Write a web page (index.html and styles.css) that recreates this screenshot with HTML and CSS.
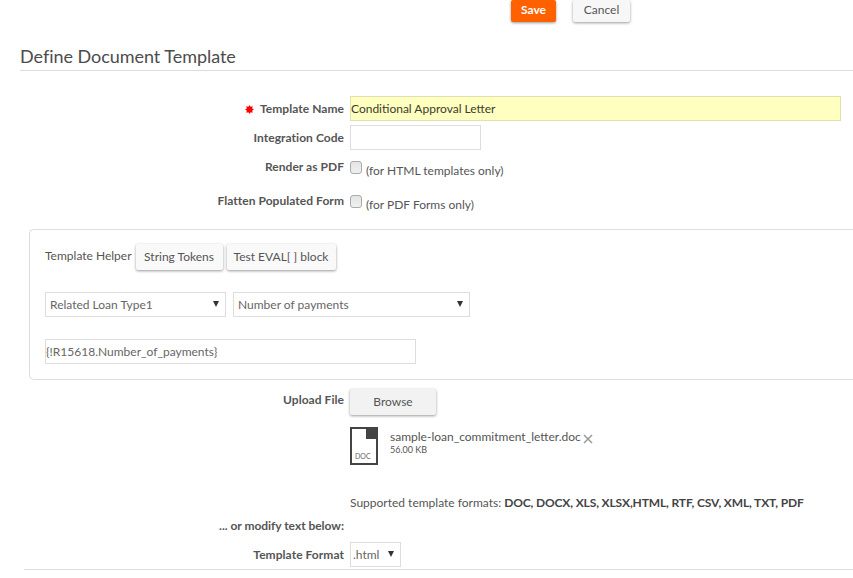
FILE: index.html
```html
<!doctype html>
<html lang="en">
<head>
    <meta charset="utf-8" />
    <title>Define Document Template</title>
    <link rel="stylesheet" href="styles.css">
</head>
<body>
    <div class="actions">
        <button class="btn save">Save</button>
        <button class="btn cancel">Cancel</button>
    </div>

    <h1 class="title">Define Document Template</h1>

    <div class="row name-row">
        <label class="label">
            <svg class="req" width="9" height="9" viewBox="0 0 18 18">
                <path d="M9 0L11.2 3.6 15.4 2.6 14.4 6.8 18 9 14.4 11.2 15.4 15.4 11.2 14.4 9 18 6.8 14.4 2.6 15.4 3.6 11.2 0 9 3.6 6.8 2.6 2.6 6.8 3.6Z" fill="#f00"/>
            </svg>Template Name</label>
        <input class="text name" type="text" value="Conditional Approval Letter">
    </div>
    <div class="row code-row">
        <label class="label">Integration Code</label>
        <input class="text code" type="text">
    </div>
    <div class="row pdf-row">
        <label class="label">Render as PDF</label>
        <input class="check" type="checkbox">
        <span class="hint">(for HTML templates only)</span>
    </div>
    <div class="row flat-row">
        <label class="label">Flatten Populated Form</label>
        <input class="check" type="checkbox">
        <span class="hint">(for PDF Forms only)</span>
    </div>

    <div class="helper">
        <div class="helper-top">
            <span class="helper-label">Template Helper</span>
            <button class="btn small tokens">String Tokens</button>
            <button class="btn small eval">Test EVAL[ ] block</button>
        </div>
        <div class="helper-selects">
            <div class="select-wrap loan">
                <select><option>Related Loan Type1</option></select>
            </div>
            <div class="select-wrap field">
                <select><option>Number of payments</option></select>
            </div>
        </div>
        <input class="text token" type="text" value="{!R15618.Number_of_payments}">
    </div>

    <div class="row upload-row">
        <label class="label">Upload File</label>
        <button class="btn browse">Browse</button>
    </div>
    <div class="file">
        <div class="doc">
            <svg width="28" height="38" viewBox="0 0 28 38">
                <path d="M1 1H27V37H1Z" fill="#fff" stroke="#444" stroke-width="2"/>
                <path d="M16 1H27V12H16Z" fill="#444"/>
            </svg>
            <span class="doc-type">DOC</span>
        </div>
        <div class="file-info">
            <div class="file-name">sample-loan_commitment_letter.doc
                <svg class="remove" width="10" height="10" viewBox="0 0 10 10">
                    <path d="M1 1L9 9M9 1L1 9" stroke="#999" stroke-width="1.5" fill="none"/>
                </svg>
            </div>
            <div class="file-size">56.00 KB</div>
        </div>
    </div>
    <div class="formats">Supported template formats: <b>DOC, DOCX, XLS, XLSX,HTML, RTF, CSV, XML, TXT, PDF</b></div>
    <div class="row modify-row">
        <label class="label">... or modify text below:</label>
    </div>
    <div class="row format-row">
        <label class="label">Template Format</label>
        <div class="select-wrap ext">
            <select><option>.html</option></select>
        </div>
    </div>
    <div class="editor"></div>
</body>
</html>
```

FILE: styles.css
```css
*{ box-sizing:border-box; }
html, body
{
    margin:0;
    height:578px;
    overflow:hidden;
}
body
{
    background:#fff;
    color:#555;
    font-family:"Lato", "Liberation Sans", sans-serif;
    font-size:12px;
}
.actions
{
    display:flex;
    height:23px;
    padding-left:511px;
    align-items:flex-start;
}
.btn
{
    font-family:inherit;
    font-size:12px;
    color:#555;
    background:#f7f7f7;
    border:0;
    border-radius:2px;
    padding:0;
    box-shadow:0 1px 3px rgba(0,0,0,0.4);
}
.save
{
    width:45px;
    height:22px;
    padding-bottom:3px;
    background:#ff6000;
    color:#fff;
    font-weight:bold;
    margin-right:17px;
}
.cancel
{
    width:57px;
    height:22px;
    padding-bottom:3px;
}
.title
{
    margin:0 0 0 20px;
    padding-top:21px;
    height:48px;
    border-bottom:1px solid #ddd;
    color:#4c4c4c;
    font-size:18px;
    line-height:24px;
    font-weight:normal;
    letter-spacing:-0.04px;
}
.row{ display:flex; align-items:flex-start; }
.label
{
    width:344px;
    margin-right:6px;
    flex:none;
    text-align:right;
    font-weight:bold;
    color:#555;
    line-height:16px;
    letter-spacing:0.05px;
}
.req
{
    margin-right:6px;
    vertical-align:-1px;
}
.text
{
    display:block;
    height:25px;
    padding:0;
    border:1px solid #ddd;
    font-family:inherit;
    font-size:12px;
    color:#555;
    outline:0;
}
.name-row{ margin-top:25px; }
.name-row .label, .code-row .label{ padding-top:5px; }
.name
{
    width:491px;
    background:#ffffc0;
    border-color:#e0e0b0;
    color:#3c3c2c;
}
.code-row{ margin-top:4px; }
.code{ width:131px; }
.pdf-row{ margin-top:8px; height:25px; }
.flat-row{ margin-top:9px; height:25px; }
.pdf-row .label{ padding-top:1px; }
.flat-row .label{ padding-top:1px; }
.check
{
    appearance:none;
    width:12px;
    height:13px;
    margin:3px 4px 0 0;
    border:1px solid #aaa;
    border-radius:3px;
    background:linear-gradient(#e4e4e4, #f0f0f0);
}
.hint{ line-height:16px; padding-top:5px; color:#555; }
.helper
{
    height:151px;
    margin:12px 0 0 29px;
    padding:14px 15px 0;
    border:1px solid #ddd;
    border-right:0;
    border-radius:5px 0 0 5px;
}
.helper-top{ display:flex; align-items:flex-start; }
.helper-label{ line-height:24px; margin-right:4px; }
.small
{
    height:26px;
    padding-bottom:2px;
    background:#f9f9f9;
    margin-right:4px;
}
.tokens{ width:87px; }
.eval{ width:109px; }
.helper-selects{ display:flex; margin-top:22px; }
.select-wrap{ position:relative; height:25px; }
.select-wrap select
{
    appearance:none;
    display:block;
    width:100%;
    height:100%;
    padding:0 4px;
    border:1px solid #ddd;
    border-radius:0;
    background:#fff;
    font-family:inherit;
    font-size:12px;
    color:#666;
}
.select-wrap::after
{
    content:"";
    position:absolute;
    top:9px;
    right:7px;
    border-left:3px solid transparent;
    border-right:3px solid transparent;
    border-top:6px solid #333;
}
.loan{ width:181px; margin-right:7px; }
.field{ width:237px; }
.token{ width:371px; margin-top:22px; color:#666; }
.upload-row{ margin-top:9px; }
.upload-row .label{ padding-top:3px; }
.browse
{
    width:86px;
    height:26px;
    padding-bottom:2px;
    background:#f2f2f2;
}
.file{ display:flex; margin:12px 0 0 350px; }
.doc{ position:relative; width:28px; height:38px; margin-right:12px; }
.doc svg{ display:block; }
.doc-type
{
    position:absolute;
    left:5px;
    bottom:5px;
    font-size:7px;
    line-height:8px;
    color:#666;
}
.file-info{ color:#555; }
.file-name{ line-height:14px; margin-top:3px; }
.remove{ vertical-align:-3px; margin-left:-1px; }
.file-size{ font-size:9px; line-height:11px; margin-top:0; }
.formats{ margin:30px 0 0 350px; line-height:16px; }
.formats b{ color:#444; letter-spacing:-0.14px; }
.modify-row{ margin-top:7px; }
.modify-row .label{ letter-spacing:-0.03px; }
.format-row{ margin-top:8px; }
.format-row .label{ padding-top:5px; }
.ext{ width:51px; margin-top:0; }
.ext select{ padding:0 2px; }
.editor
{
    margin:2px 0 0 24px;
    border-top:1px solid #ddd;
    height:10px;
}
```
